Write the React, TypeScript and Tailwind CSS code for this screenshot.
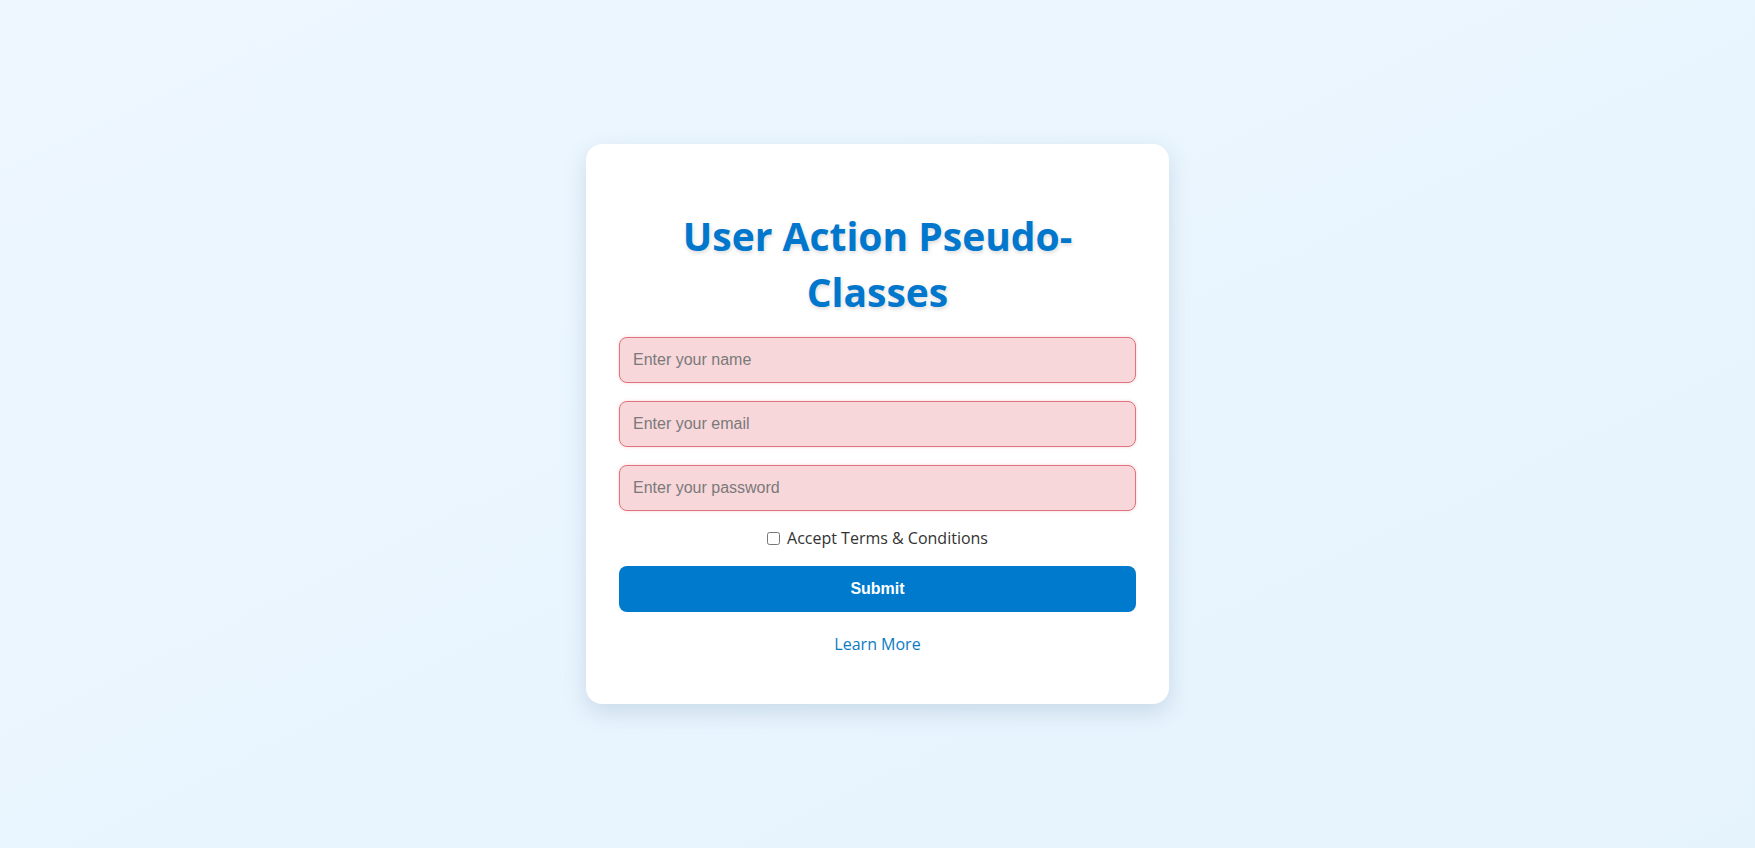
import { useState } from 'react'

export default function App() {
  const [accepted, setAccepted] = useState(false)

  const field =
    'block h-[46px] w-full rounded-lg border border-[#e0737d] bg-[#f8d7da] px-[13px] font-["Liberation_Sans",Arial,sans-serif] text-[16px] text-[#333] shadow-[0_0_3px_rgba(224,115,125,0.35)] outline-none placeholder:text-[#7a7a7a]'

  return (
    <div className="flex min-h-screen items-center justify-center bg-gradient-to-br from-[#eef7ff] to-[#e5f3fd] font-['Open_Sans',sans-serif]">
      <div className="w-[583px] rounded-2xl bg-white p-[33px] shadow-[0_8px_22px_rgba(60,100,140,0.18)]">
        <h1 className="mb-[17px] mt-[31px] text-center text-[39px] font-bold leading-[56px] text-[#0077cc] [text-shadow:1px_2px_4px_rgba(0,0,0,0.15)]">
          User Action Pseudo-Classes
        </h1>

        <form onSubmit={(e) => e.preventDefault()}>
          <input type="text" placeholder="Enter your name" className={field} />
          <input type="email" placeholder="Enter your email" className={`${field} mt-[18px]`} />
          <input type="password" placeholder="Enter your password" className={`${field} mt-[18px]`} />

          <label className="mt-[15px] flex h-6 items-center justify-center gap-[7px] text-[16px] text-[#333]">
            <input
              type="checkbox"
              checked={accepted}
              onChange={(e) => setAccepted(e.target.checked)}
              className="h-[13px] w-[13px]"
            />
            Accept Terms &amp; Conditions
          </label>

          <button
            type="submit"
            className="mt-[16px] block h-[46px] w-full rounded-lg bg-[#007acc] font-['Liberation_Sans',Arial,sans-serif] text-[16px] font-bold text-white"
          >
            Submit
          </button>
        </form>

        <div className="mb-[15px] mt-[20px] text-center leading-6">
          <a href="#" className="text-[16px] text-[#0a7bc4]">
            Learn More
          </a>
        </div>
      </div>
    </div>
  )
}
